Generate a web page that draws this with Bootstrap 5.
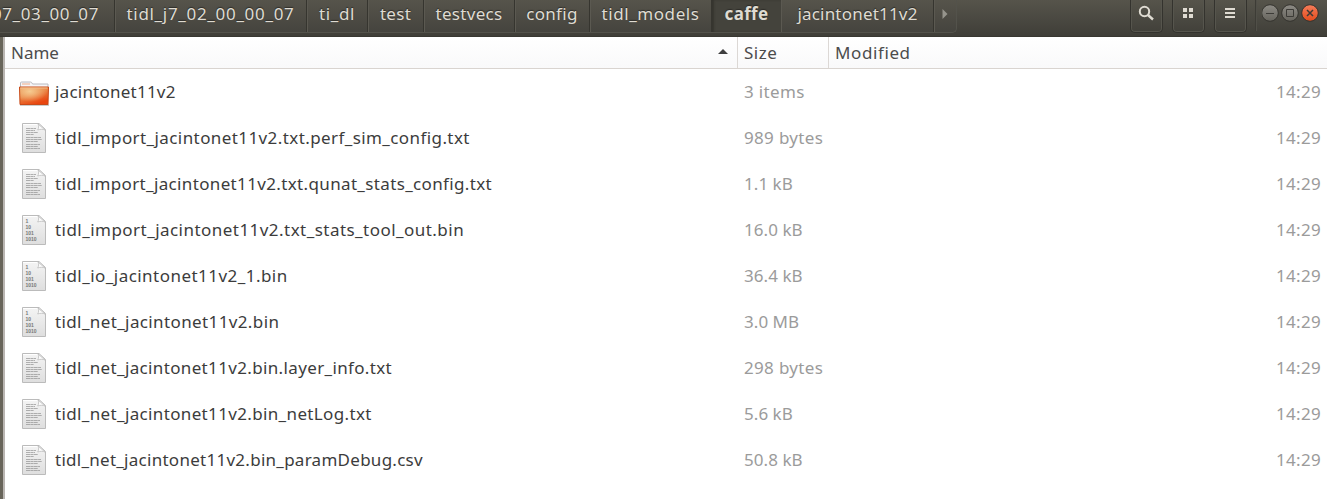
<!DOCTYPE html>
<html lang="en">
<head>
<meta charset="utf-8">
<meta name="viewport" content="width=device-width, initial-scale=1">
<title>caffe</title>
<link rel="stylesheet" href="https://cdn.jsdelivr.net/npm/bootstrap@5.3.0/dist/css/bootstrap.min.css">
<style>
body{font-family:"Noto Sans","Open Sans",sans-serif;font-size:17px;line-height:24px;color:#3c3c3c;background:#fff;height:499px;overflow:hidden}
.topbar{height:37px;background:linear-gradient(#56544b,#3f3e38);border-bottom:1px solid #383731;color:#dfdbd2;text-shadow:0 -1px 1px #2d2c28;flex:none}
.crumbs{height:33px;border-bottom:1px solid #53524b;border-right:1px solid #53524b;border-radius:0 0 5px 0;background:linear-gradient(#56544b,#45443e)}
.crumb{height:32px;border-right:1px solid #36352f;box-shadow:1px 0 #5b5951;white-space:nowrap;padding-bottom:5px;letter-spacing:.3px}
.crumb.active{background:#44433c;box-shadow:inset 2px 0 2px #36352f;border-right-color:#5b5951;font-weight:700}
.c1{width:115px;overflow:hidden;padding-right:15px;letter-spacing:.6px}.c2{width:192px;letter-spacing:.68px}.c3{width:61px;letter-spacing:.6px}.c4{width:56px}.c5{width:91px}.c6{width:75px}.c7{width:122px;letter-spacing:.58px}.c8{width:70px}.c9{width:152px;letter-spacing:.2px}.c10{width:22px;border:0;box-shadow:none}
.tool{width:33px;height:33px;border:1px solid #34332e;border-top:0;border-radius:0 0 5px 5px;box-shadow:inset 0 -1px #56554d,inset 1px 0 #56554d,inset -1px 0 #56554d}
.tools{gap:9px;margin-right:8px}
.divider{width:2px;height:31px;border-left:1px solid #3d3c36;border-right:1px solid #504f48;margin-right:5px}
.edge{width:5px;background:#68655a;border-right:2px solid #bab6b2;flex:none}
.heads{height:32px;background:linear-gradient(#fff,#f9f9fa);border-bottom:1px solid #d9d4d0;color:#4c4c4c}
.col-name{width:733px;flex:none}
.col-size{width:91px;flex:none;padding-left:6px;white-space:nowrap}
.heads .col-name,.heads .col-size{border-right:1px solid #dcd8d5}
.heads .col-name{padding:0 9px 0 6px}
.heads .col-size{letter-spacing:.5px}
.heads .col-mod{padding-left:6px;letter-spacing:.6px}
.sort{margin-bottom:2px}
.file{height:46px}
.file .col-name{padding-left:14px}
.file .col-size,.file .when{color:#9b9b9b}
.file .col-size{letter-spacing:.05px}
.file .col-size.units{letter-spacing:.33px}
.when{padding-right:6px;letter-spacing:.3px}
.icon{width:36px;height:32px;flex:none}
.label{white-space:nowrap}
.t22{letter-spacing:.23px}.t27{letter-spacing:.27px}.t35{letter-spacing:.355px}.t38{letter-spacing:.38px}.t41{letter-spacing:.41px}.t46{letter-spacing:.46px}
</style>
<script src="https://cdn.jsdelivr.net/npm/bootstrap@5.3.0/dist/js/bootstrap.bundle.min.js"></script>
</head>
<body class="d-flex flex-column">
<svg width="0" height="0" class="position-absolute" aria-hidden="true">
<defs>
<linearGradient id="paper" x2="0" y2="1"><stop stop-color="#f4f4f4"/><stop offset="1" stop-color="#dedede"/></linearGradient>
<linearGradient id="orange" x2=".5" y2="1"><stop stop-color="#e99b5b"/><stop offset=".5" stop-color="#e98444"/><stop offset="1" stop-color="#e9450f"/></linearGradient>
<radialGradient id="shine" cx=".35" cy=".25" r=".6"><stop stop-color="#f6cb91"/><stop offset="1" stop-color="#f6cb91" stop-opacity="0"/></radialGradient>
<linearGradient id="grey" x2="0" y2="1"><stop stop-color="#8d8b85"/><stop offset="1" stop-color="#66645d"/></linearGradient>
<linearGradient id="red" x2="0" y2="1"><stop stop-color="#f57d5a"/><stop offset="1" stop-color="#e34b1c"/></linearGradient>
<symbol id="sheet" viewBox="0 0 36 32"><path d="M3.500 1.500h16.500l6.500 6v23h-23z" fill="url(#paper)" stroke="#bbb"/><path d="M4 2.500h15" stroke="#fff"/><path d="M19 2c1 2 .8 4-.3 6 2.500-1 5-.9 7.300 0z" fill="#fcfcfc" stroke="#bdbdbd" stroke-width=".8"/></symbol>
<symbol id="txt" viewBox="0 0 36 32"><use href="#sheet"/><path d="M7 6.500h10M7 8.500h9M7 10.500h12M7 12.500h8M7 15.500h15M7 17.500h16M7 19.500h12M7 22.500h14M7 24.500h12M7 26.500h14" stroke="#8c8c8c" stroke-opacity=".65" stroke-dasharray="4 .4 3 .3"/></symbol>
<symbol id="bin" viewBox="0 0 36 32"><use href="#sheet"/><g font-family="Liberation Sans" font-size="5" font-weight="700" fill="#777"><text x="6.500" y="8.500">1</text><text x="6.500" y="14.500">10</text><text x="6.500" y="20.500">101</text><text x="6.500" y="26.500">1010</text></g></symbol>
<symbol id="folder" viewBox="0 0 36 32"><g transform="translate(0 2.500)"><path d="M1.500 10V4.500q0-1 1-1h9q1 0 1.500 1l.5 1h15.500v5z" fill="#f5f5f7" stroke="#babac0"/><path d="M3 5.500h8" stroke="#efab86"/><path d="M1 26.500h29" stroke="#ccc" stroke-width="2"/><path d="M.5 8.500h29l-.5 17.500H1z" fill="url(#orange)"/><path d="M.5 8.500h29l-.5 17.500H1z" fill="url(#shine)" stroke="#c84a19"/><path d="M1.500 9.500h27" stroke="#f2bd8b"/></g></symbol>
</defs>
</svg>
<header class="topbar d-flex align-items-start">
<nav class="crumbs d-flex">
<div class="crumb c1 d-flex align-items-center justify-content-end"><span>07_03_00_07</span></div>
<div class="crumb c2 d-flex align-items-center justify-content-center"><span>tidl_j7_02_00_00_07</span></div>
<div class="crumb c3 d-flex align-items-center justify-content-center"><span>ti_dl</span></div>
<div class="crumb c4 d-flex align-items-center justify-content-center"><span>test</span></div>
<div class="crumb c5 d-flex align-items-center justify-content-center"><span>testvecs</span></div>
<div class="crumb c6 d-flex align-items-center justify-content-center"><span>config</span></div>
<div class="crumb c7 d-flex align-items-center justify-content-center"><span>tidl_models</span></div>
<div class="crumb c8 active d-flex align-items-center justify-content-center"><span>caffe</span></div>
<div class="crumb c9 d-flex align-items-center justify-content-center"><span>jacintonet11v2</span></div>
<div class="crumb c10 d-flex align-items-center justify-content-center"><svg width="6" height="10"><path d="M.5 0l5 5-5 5z" fill="#96948c"/></svg></div>
</nav>
<div class="tools d-flex ms-auto">
<div class="tool"><svg width="31" height="32" class="d-block"><circle cx="13.500" cy="11.500" r="4.700" fill="none" stroke="#dfdbd2" stroke-width="2"/><path d="M17 15l5 4.500" stroke="#dfdbd2" stroke-width="2.400"/></svg></div>
<div class="tool"><svg width="31" height="32" class="d-block"><path d="M10 8h4v4h-4zm6 0h4v4h-4zm-6 6h4v4h-4zm6 0h4v4h-4z" fill="#dfdbd2"/></svg></div>
<div class="tool"><svg width="31" height="32" class="d-block"><path d="M10 9h10M10 13h10M10 17h10" stroke="#dfdbd2" stroke-width="2"/></svg></div>
</div>
<div class="divider"></div>
<svg width="65" height="30" class="flex-shrink-0"><g stroke="#34332e"><circle cx="8" cy="13" r="8.300" fill="url(#grey)"/><circle cx="28" cy="13" r="8.300" fill="url(#grey)"/><circle cx="48" cy="13" r="8.300" fill="url(#red)"/></g><g fill="none" stroke="#3c3b37"><path d="M4 13.500h8"/><path d="M24.500 9.500h7v7h-7z"/><path d="M45 10l6 6m0-6l-6 6" stroke-width="1.500"/></g></svg>
</header>
<div class="d-flex flex-grow-1">
<div class="edge"></div>
<main class="flex-grow-1">
<div class="heads d-flex align-items-center">
<div class="col-name h-100 d-flex align-items-center justify-content-between"><span>Name</span><svg class="sort" width="10" height="5"><path d="M0 5l5-5 5 5z" fill="#3f3f3f"/></svg></div>
<div class="col-size h-100 d-flex align-items-center"><span>Size</span></div>
<div class="col-mod"><span>Modified</span></div>
</div>
<div class="file d-flex align-items-center"><div class="col-name d-flex align-items-center"><svg class="icon"><use href="#folder"/></svg><span class="label t22">jacintonet11v2</span></div><div class="col-size units"><span>3 items</span></div><div class="when ms-auto">14:29</div></div>
<div class="file d-flex align-items-center"><div class="col-name d-flex align-items-center"><svg class="icon"><use href="#txt"/></svg><span class="label t41">tidl_import_jacintonet11v2.txt.perf_sim_config.txt</span></div><div class="col-size units"><span>989 bytes</span></div><div class="when ms-auto">14:29</div></div>
<div class="file d-flex align-items-center"><div class="col-name d-flex align-items-center"><svg class="icon"><use href="#txt"/></svg><span class="label t35">tidl_import_jacintonet11v2.txt.qunat_stats_config.txt</span></div><div class="col-size"><span>1.1 kB</span></div><div class="when ms-auto">14:29</div></div>
<div class="file d-flex align-items-center"><div class="col-name d-flex align-items-center"><svg class="icon"><use href="#bin"/></svg><span class="label t46">tidl_import_jacintonet11v2.txt_stats_tool_out.bin</span></div><div class="col-size"><span>16.0 kB</span></div><div class="when ms-auto">14:29</div></div>
<div class="file d-flex align-items-center"><div class="col-name d-flex align-items-center"><svg class="icon"><use href="#bin"/></svg><span class="label t46">tidl_io_jacintonet11v2_1.bin</span></div><div class="col-size"><span>36.4 kB</span></div><div class="when ms-auto">14:29</div></div>
<div class="file d-flex align-items-center"><div class="col-name d-flex align-items-center"><svg class="icon"><use href="#bin"/></svg><span class="label t38">tidl_net_jacintonet11v2.bin</span></div><div class="col-size"><span>3.0 MB</span></div><div class="when ms-auto">14:29</div></div>
<div class="file d-flex align-items-center"><div class="col-name d-flex align-items-center"><svg class="icon"><use href="#txt"/></svg><span class="label t35">tidl_net_jacintonet11v2.bin.layer_info.txt</span></div><div class="col-size units"><span>298 bytes</span></div><div class="when ms-auto">14:29</div></div>
<div class="file d-flex align-items-center"><div class="col-name d-flex align-items-center"><svg class="icon"><use href="#txt"/></svg><span class="label t35">tidl_net_jacintonet11v2.bin_netLog.txt</span></div><div class="col-size"><span>5.6 kB</span></div><div class="when ms-auto">14:29</div></div>
<div class="file d-flex align-items-center"><div class="col-name d-flex align-items-center"><svg class="icon"><use href="#txt"/></svg><span class="label t27">tidl_net_jacintonet11v2.bin_paramDebug.csv</span></div><div class="col-size"><span>50.8 kB</span></div><div class="when ms-auto">14:29</div></div>
</main>
</div>
</body>
</html>
